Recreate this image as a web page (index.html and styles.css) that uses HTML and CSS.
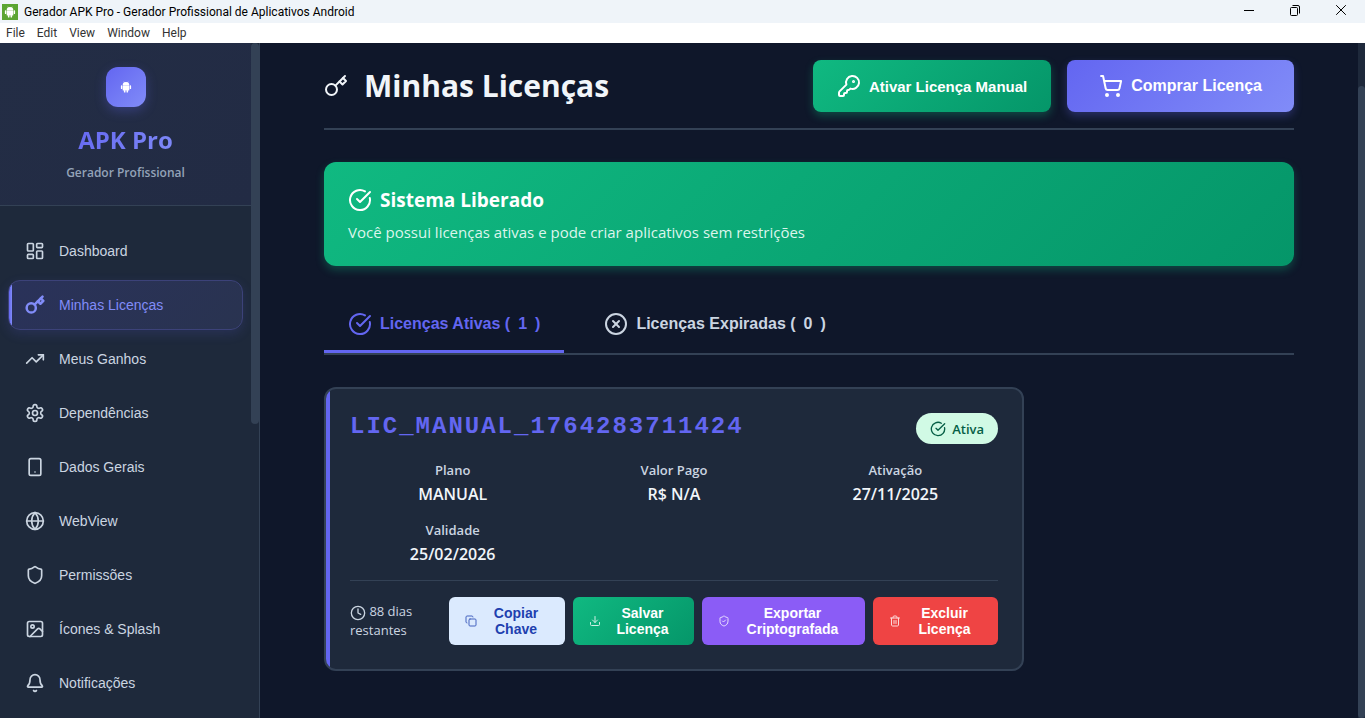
FILE: index.html
```html
<!DOCTYPE html>
<html lang="pt-BR">
<head>
    <meta charset="UTF-8">
    <meta name="viewport" content="width=device-width, initial-scale=1.0">
    <title>Gerador APK Pro - Gerador Profissional de Aplicativos Android</title>
    <link rel="stylesheet" href="styles.css">
</head>
<body>
    <!-- Shared icons -->
    <svg class="sprite" aria-hidden="true">
        <symbol id="icon-android" viewBox="0 0 16 16">
            <path d="M3.600 5.400a4.400 4 0 0 1 8.800 0z"/>
            <path d="M3.600 5.800h8.800v6.200a.8.8 0 0 1-.8.8H4.400a.8.8 0 0 1-.8-.8z"/>
            <rect x="1.200" y="5.800" width="1.900" height="5" rx=".9"/>
            <rect x="12.900" y="5.800" width="1.900" height="5" rx=".9"/>
            <rect x="5.200" y="12" width="2.100" height="3.400" rx=".9"/>
            <rect x="8.700" y="12" width="2.100" height="3.400" rx=".9"/>
            <path d="M5 .8l1.200 1.800M11 .8L9.800 2.600" stroke="currentColor" stroke-width=".6"/>
        </symbol>
        <symbol id="icon-key" viewBox="0 0 24 24">
            <circle cx="7.500" cy="15.500" r="5.500"/>
            <path d="m21 2-9.600 9.600"/>
            <path d="m15.500 7.500 3 3L22 7l-3-3"/>
        </symbol>
        <symbol id="icon-check" viewBox="0 0 24 24">
            <path d="M21.801 10A10 10 0 1 1 17 3.335"/>
            <path d="m9 11 3 3L22 4"/>
        </symbol>
    </svg>

    <header class="titlebar">
        <span class="app-icon"><svg><use href="#icon-android"/></svg></span>
        <span class="app-title">Gerador APK Pro - Gerador Profissional de Aplicativos Android</span>
        <div class="window-controls">
            <button type="button" aria-label="Minimizar"><svg viewBox="0 0 12 12"><path d="M1 6.500h10"/></svg></button>
            <button type="button" aria-label="Restaurar"><svg viewBox="0 0 12 12"><rect x="1.500" y="3.500" width="7" height="8" rx="1"/><path d="M3.500 1.500H9a1.500 1.500 0 0 1 1.500 1.500v6.500"/></svg></button>
            <button type="button" aria-label="Fechar"><svg viewBox="0 0 12 12"><path d="M1.200 1.200l9.600 9.600M10.800 1.200l-9.600 9.600"/></svg></button>
        </div>
    </header>
    <nav class="menubar">
        <button type="button">File</button>
        <button type="button">Edit</button>
        <button type="button">View</button>
        <button type="button">Window</button>
        <button type="button">Help</button>
    </nav>

    <div class="app">
        <aside class="sidebar">
            <div class="sidebar-content">
                <div class="brand">
                    <span class="brand-logo"><svg><use href="#icon-android"/></svg></span>
                    <h2>APK Pro</h2>
                    <p>Gerador Profissional</p>
                </div>
                <nav class="side-nav">
                    <a href="#dashboard" class="nav-item">
                        <svg class="icon" viewBox="0 0 24 24"><rect width="7" height="9" x="3" y="3" rx="1"/><rect width="7" height="5" x="14" y="3" rx="1"/><rect width="7" height="9" x="14" y="12" rx="1"/><rect width="7" height="5" x="3" y="16" rx="1"/></svg>
                        Dashboard
                    </a>
                    <a href="#licencas" class="nav-item active">
                        <svg class="icon"><use href="#icon-key"/></svg>
                        Minhas Licenças
                    </a>
                    <a href="#ganhos" class="nav-item">
                        <svg class="icon" viewBox="0 0 24 24"><path d="M22 7l-8.500 8.500-5-5L2 17"/><path d="M16 7h6v6"/></svg>
                        Meus Ganhos
                    </a>
                    <a href="#dependencias" class="nav-item">
                        <svg class="icon" viewBox="0 0 24 24"><path d="M12.220 2h-.44a2 2 0 0 0-2 2v.18a2 2 0 0 1-1 1.730l-.43.25a2 2 0 0 1-2 0l-.15-.08a2 2 0 0 0-2.730.73l-.22.38a2 2 0 0 0 .73 2.730l.15.1a2 2 0 0 1 1 1.720v.51a2 2 0 0 1-1 1.740l-.15.09a2 2 0 0 0-.73 2.730l.22.38a2 2 0 0 0 2.730.73l.15-.08a2 2 0 0 1 2 0l.43.25a2 2 0 0 1 1 1.730V20a2 2 0 0 0 2 2h.44a2 2 0 0 0 2-2v-.18a2 2 0 0 1 1-1.730l.43-.25a2 2 0 0 1 2 0l.15.08a2 2 0 0 0 2.730-.73l.22-.39a2 2 0 0 0-.73-2.730l-.15-.08a2 2 0 0 1-1-1.740v-.5a2 2 0 0 1 1-1.740l.15-.09a2 2 0 0 0 .73-2.730l-.22-.38a2 2 0 0 0-2.730-.73l-.15.08a2 2 0 0 1-2 0l-.43-.25a2 2 0 0 1-1-1.730V4a2 2 0 0 0-2-2z"/><circle cx="12" cy="12" r="3"/></svg>
                        Dependências
                    </a>
                    <a href="#dados" class="nav-item">
                        <svg class="icon" viewBox="0 0 24 24"><rect width="14" height="20" x="5" y="2" rx="2"/><path d="M12 18h.01"/></svg>
                        Dados Gerais
                    </a>
                    <a href="#webview" class="nav-item">
                        <svg class="icon" viewBox="0 0 24 24"><circle cx="12" cy="12" r="10"/><path d="M12 2a14.500 14.500 0 0 0 0 20 14.500 14.500 0 0 0 0-20"/><path d="M2 12h20"/></svg>
                        WebView
                    </a>
                    <a href="#permissoes" class="nav-item">
                        <svg class="icon" viewBox="0 0 24 24"><path d="M20 13c0 5-3.500 7.500-7.660 8.950a1 1 0 0 1-.67-.01C7.500 20.500 4 18 4 13V6a1 1 0 0 1 1-1c2 0 4.500-1.200 6.240-2.720a1.170 1.170 0 0 1 1.520 0C14.510 3.810 17 5 19 5a1 1 0 0 1 1 1z"/></svg>
                        Permissões
                    </a>
                    <a href="#icones" class="nav-item">
                        <svg class="icon" viewBox="0 0 24 24"><rect width="18" height="18" x="3" y="3" rx="2"/><circle cx="9" cy="9" r="2"/><path d="m21 15-3.086-3.086a2 2 0 0 0-2.828 0L6 21"/></svg>
                        Ícones &amp; Splash
                    </a>
                    <a href="#notificacoes" class="nav-item">
                        <svg class="icon" viewBox="0 0 24 24"><path d="M6 8a6 6 0 0 1 12 0c0 4.500 1.400 6.200 2.700 7.300a1 1 0 0 1-.7 1.700H4a1 1 0 0 1-.7-1.700C4.600 14.200 6 12.500 6 8z"/><path d="M10.300 21a1.940 1.940 0 0 0 3.400 0"/></svg>
                        Notificações
                    </a>
                </nav>
            </div>
            <div class="scrollbar side-scroll"><div class="thumb"></div></div>
        </aside>

        <main class="main">
            <div class="page-header">
                <h1><svg class="icon"><use href="#icon-key"/></svg> Minhas Licenças</h1>
                <div class="header-actions">
                    <button type="button" class="btn btn-success">
                        <svg class="icon" viewBox="0 0 24 24"><path d="M2.586 17.414A2 2 0 0 0 2 18.828V21a1 1 0 0 0 1 1h3a1 1 0 0 0 1-1v-1a1 1 0 0 1 1-1h1a1 1 0 0 0 1-1v-1a1 1 0 0 1 1-1h.172a2 2 0 0 0 1.414-.586l.814-.814a6.500 6.500 0 1 0-4-4z"/><circle cx="16.500" cy="7.500" r=".5" fill="currentColor"/></svg>
                        Ativar Licença Manual
                    </button>
                    <button type="button" class="btn btn-primary">
                        <svg class="icon" viewBox="0 0 24 24"><circle cx="8" cy="21" r="1" fill="currentColor"/><circle cx="19" cy="21" r="1" fill="currentColor"/><path d="M2.050 2.050h2l2.660 12.420a2 2 0 0 0 2 1.580h9.780a2 2 0 0 0 1.950-1.570l1.650-7.430H5.120"/></svg>
                        Comprar Licença
                    </button>
                </div>
            </div>

            <section class="status-banner">
                <h3><svg class="icon"><use href="#icon-check"/></svg> Sistema Liberado</h3>
                <p>Você possui licenças ativas e pode criar aplicativos sem restrições</p>
            </section>

            <div class="tabs" role="tablist">
                <button type="button" class="tab active" role="tab" aria-selected="true">
                    <svg class="icon"><use href="#icon-check"/></svg>
                    <span>Licenças Ativas (</span><span>1</span><span>)</span>
                </button>
                <button type="button" class="tab" role="tab" aria-selected="false">
                    <svg class="icon" viewBox="0 0 24 24"><circle cx="12" cy="12" r="10"/><path d="m15 9-6 6"/><path d="m9 9 6 6"/></svg>
                    <span>Licenças Expiradas (</span><span>0</span><span>)</span>
                </button>
            </div>

            <article class="license-card">
                <div class="license-top">
                    <div class="license-key">LIC_MANUAL_1764283711424</div>
                    <span class="badge"><svg class="icon"><use href="#icon-check"/></svg> Ativa</span>
                </div>
                <dl class="license-info">
                    <div><dt>Plano</dt><dd>MANUAL</dd></div>
                    <div><dt>Valor Pago</dt><dd>R$ N/A</dd></div>
                    <div><dt>Ativação</dt><dd>27/11/2025</dd></div>
                    <div><dt>Validade</dt><dd>25/02/2026</dd></div>
                </dl>
                <div class="license-footer">
                    <div class="remaining"><svg class="icon" viewBox="0 0 24 24"><circle cx="12" cy="12" r="10"/><path d="M12 6v6l4 2"/></svg> 88 dias restantes</div>
                    <div class="license-actions">
                        <button type="button" class="btn-small btn-copy">
                            <svg class="icon" viewBox="0 0 24 24"><rect width="14" height="14" x="8" y="8" rx="2"/><path d="M4 16c-1.100 0-2-.9-2-2V4c0-1.100.9-2 2-2h10c1.100 0 2 .9 2 2"/></svg>
                            <span>Copiar Chave</span>
                        </button>
                        <button type="button" class="btn-small btn-save">
                            <svg class="icon" viewBox="0 0 24 24"><path d="M21 15v4a2 2 0 0 1-2 2H5a2 2 0 0 1-2-2v-4"/><path d="m7 10 5 5 5-5"/><path d="M12 15V3"/></svg>
                            <span>Salvar Licença</span>
                        </button>
                        <button type="button" class="btn-small btn-export">
                            <svg class="icon" viewBox="0 0 24 24"><path d="M20 13c0 5-3.500 7.500-7.660 8.950a1 1 0 0 1-.67-.01C7.500 20.500 4 18 4 13V6a1 1 0 0 1 1-1c2 0 4.500-1.200 6.240-2.720a1.170 1.170 0 0 1 1.520 0C14.510 3.810 17 5 19 5a1 1 0 0 1 1 1z"/><path d="m9 12 2 2 4-4"/></svg>
                            <span>Exportar Criptografada</span>
                        </button>
                        <button type="button" class="btn-small btn-delete">
                            <svg class="icon" viewBox="0 0 24 24"><path d="M3 6h18"/><path d="M19 6v14c0 1-1 2-2 2H7c-1 0-2-1-2-2V6"/><path d="M8 6V4c0-1 1-2 2-2h4c1 0 2 1 2 2v2"/><path d="M10 11v6M14 11v6"/></svg>
                            <span>Excluir Licença</span>
                        </button>
                    </div>
                </div>
            </article>
        </main>
        <div class="scrollbar main-scroll"><div class="thumb"></div></div>
    </div>
</body>
</html>
```
FILE: styles.css
```css
* {
    box-sizing: border-box;
    margin: 0;
    padding: 0;
}

body {
    display: flex;
    flex-direction: column;
    height: 100vh;
    overflow: hidden;
    background: #0f172a;
    color: #f1f5f9;
    font-family: "Open Sans", "Noto Sans", sans-serif;
    font-size: 16px;
}

button {
    font-family: "Liberation Sans", Arial, sans-serif;
    border: none;
    background: none;
    cursor: pointer;
}

a {
    text-decoration: none;
}

.sprite {
    display: none;
}

.icon {
    width: 24px;
    height: 24px;
    flex-shrink: 0;
    fill: none;
    stroke: currentColor;
    stroke-width: 2;
    stroke-linecap: round;
    stroke-linejoin: round;
}

/* Window frame */
.titlebar {
    display: flex;
    align-items: center;
    flex-shrink: 0;
    height: 23px;
    padding: 0 1px 0 2px;
    background: #eff4f9;
    color: #000;
    font-family: Roboto, sans-serif;
    font-size: 12px;
}

.app-icon {
    display: flex;
    align-items: center;
    justify-content: center;
    width: 16px;
    height: 16px;
    margin-right: 6px;
    background: #5ba532;
    color: #fff;
}

.app-icon svg {
    width: 12px;
    height: 12px;
    fill: currentColor;
}

.window-controls {
    display: flex;
    align-self: flex-start;
    margin-left: auto;
}

.window-controls button {
    display: flex;
    align-items: center;
    justify-content: center;
    width: 46px;
    height: 20px;
}

.window-controls svg {
    width: 12px;
    height: 12px;
    fill: none;
    stroke: #000;
    stroke-width: 1;
}

.menubar {
    display: flex;
    flex-shrink: 0;
    gap: 12px;
    height: 20px;
    padding-left: 6px;
    background: #fff;
}

.menubar button {
    color: #333;
    font-family: Roboto, sans-serif;
    font-size: 12px;
}

.app {
    display: flex;
    flex: 1;
    min-height: 0;
}

/* Sidebar */
.sidebar {
    display: flex;
    flex-shrink: 0;
    width: 260px;
    background: #1e293b;
    border-right: 1px solid #334155;
}

.sidebar-content {
    flex: 1;
    overflow: hidden;
}

.scrollbar {
    flex-shrink: 0;
    width: 8px;
}

.thumb {
    background: #334155;
    border-radius: 4px;
}

.side-scroll .thumb {
    height: 381px;
}

.main-scroll {
    width: 7px;
    padding-top: 43px;
    background: #1e293b;
}

.main-scroll .thumb {
    height: 100%;
}

.brand {
    display: flex;
    flex-direction: column;
    align-items: center;
    padding: 24px 16px 22px;
    background: linear-gradient(135deg, #232d45, #222b44);
    border-bottom: 1px solid #334155;
}

.brand-logo {
    display: flex;
    align-items: center;
    justify-content: center;
    width: 40px;
    height: 40px;
    margin-bottom: 16px;
    border-radius: 12px;
    background: linear-gradient(135deg, #6366f1, #818cf8);
    box-shadow: 0 4px 12px rgba(99, 102, 241, 0.3);
    color: #fff;
}

.brand-logo svg {
    width: 12px;
    height: 12px;
    fill: currentColor;
}

.brand h2 {
    background: linear-gradient(135deg, #6366f1, #818cf8);
    -webkit-background-clip: text;
    background-clip: text;
    color: transparent;
    font-size: 24px;
    line-height: 34px;
}

.brand p {
    margin-top: 6px;
    color: #94a3b8;
    font-size: 12px;
    font-weight: 600;
    line-height: 20px;
}

.side-nav {
    display: flex;
    flex-direction: column;
    gap: 4px;
    padding: 20px 8px;
}

.nav-item {
    display: flex;
    align-items: center;
    gap: 14px;
    height: 50px;
    padding: 0 16px;
    border: 1px solid transparent;
    border-radius: 12px;
    color: #cbd5e1;
    font-family: "Liberation Sans", Arial, sans-serif;
    font-size: 14px;
}

.nav-item .icon {
    width: 20px;
    height: 20px;
}

.nav-item.active {
    background: linear-gradient(90deg, #6366f1, #818cf8) left / 3px 100% no-repeat, linear-gradient(135deg, #2a325a, #293350);
    border-color: #3c4279;
    box-shadow: 0 4px 12px rgba(99, 102, 241, 0.15);
    color: #818cf8;
}

.nav-item.active .icon {
    stroke-width: 3;
}

/* Page content */
.main {
    flex: 1;
    min-width: 0;
    overflow: hidden;
    padding: 17px 64px 0;
}

.page-header {
    display: flex;
    align-items: center;
    justify-content: space-between;
    padding-bottom: 16px;
    border-bottom: 2px solid #334155;
}

.page-header h1 {
    display: flex;
    align-items: center;
    gap: 16px;
    font-size: 30px;
    line-height: 44px;
}

.header-actions {
    display: flex;
    gap: 16px;
}

.btn {
    display: flex;
    align-items: center;
    gap: 8px;
    height: 52px;
    padding: 0 24px;
    border-radius: 8px;
    color: #fff;
    font-size: 16px;
    font-weight: bold;
}

.btn-success {
    background: linear-gradient(135deg, #10b981, #059669);
    box-shadow: 0 4px 8px rgba(16, 185, 129, 0.3);
    font-size: 15px;
}

.btn-primary {
    padding: 0 32px;
    background: linear-gradient(135deg, #6366f1, #818cf8);
    box-shadow: 0 4px 8px rgba(99, 102, 241, 0.3);
}

.status-banner {
    margin-top: 32px;
    padding: 24px;
    border-radius: 12px;
    background: linear-gradient(135deg, #10b981, #059669);
    box-shadow: 0 4px 8px rgba(16, 185, 129, 0.3);
}

.status-banner h3 {
    display: flex;
    align-items: center;
    gap: 8px;
    margin-bottom: 8px;
    color: #fff;
    font-size: 19px;
    line-height: 28px;
}

.status-banner p {
    color: #dcf5ec;
    font-size: 15px;
    line-height: 20px;
}

.tabs {
    display: flex;
    gap: 16px;
    margin-top: 32px;
    border-bottom: 2px solid #334155;
}

.tab {
    display: flex;
    align-items: center;
    gap: 8px;
    padding: 14px 24px;
    border-bottom: 3px solid transparent;
    color: #cbd5e1;
    font-size: 16px;
    font-weight: bold;
}

.tab.active {
    border-bottom-color: #6366f1;
    color: #6366f1;
}

/* License card */
.license-card {
    max-width: 700px;
    margin-top: 32px;
    padding: 24px;
    border: 2px solid #334155;
    border-radius: 12px;
    background: linear-gradient(#6366f1, #6366f1) left / 4px 100% no-repeat, #1e293b;
}

.license-top {
    display: flex;
    justify-content: space-between;
    margin-bottom: 16px;
}

.license-key {
    color: #6366f1;
    font-family: "Courier New", "Liberation Mono", monospace;
    font-size: 24px;
    font-weight: bold;
    letter-spacing: 2px;
    line-height: 28px;
}

.badge {
    display: flex;
    align-items: center;
    gap: 6px;
    height: 31px;
    padding: 0 14px;
    border-radius: 16px;
    background: #d1fae5;
    color: #065f46;
    font-size: 13px;
    font-weight: 600;
}

.badge .icon {
    width: 16px;
    height: 16px;
}

.license-info {
    display: grid;
    grid-template-columns: repeat(3, 1fr);
    gap: 16px;
    margin-bottom: 16px;
    text-align: center;
}

.license-info dt {
    margin-bottom: 4px;
    color: #cbd5e1;
    font-size: 13px;
    font-weight: 600;
    line-height: 20px;
}

.license-info dd {
    font-size: 16px;
    font-weight: 600;
    line-height: 20px;
}

.license-footer {
    display: flex;
    align-items: center;
    gap: 16px;
    padding-top: 16px;
    border-top: 1px solid #334155;
}

.remaining {
    flex: 1;
    color: #cbd5e1;
    font-size: 13px;
    line-height: 19px;
}

.remaining .icon {
    width: 16px;
    height: 16px;
    vertical-align: middle;
}

.license-actions {
    display: grid;
    grid-template-columns: 116px 121px 163px 125px;
    gap: 8px;
}

.btn-small {
    display: flex;
    align-items: center;
    gap: 6px;
    height: 48px;
    padding: 0 16px;
    border-radius: 6px;
    color: #fff;
    font-size: 14px;
    font-weight: bold;
    line-height: 16px;
}

.btn-small .icon {
    width: 12px;
    height: 12px;
    opacity: 0.8;
}

.btn-small span {
    flex: 1;
}

.btn-copy {
    background: #dbeafe;
    color: #1e40af;
}

.btn-save {
    background: linear-gradient(135deg, #10b981, #059669);
}

.btn-export {
    background: #8b5cf6;
}

.btn-delete {
    background: #ef4444;
}
```
